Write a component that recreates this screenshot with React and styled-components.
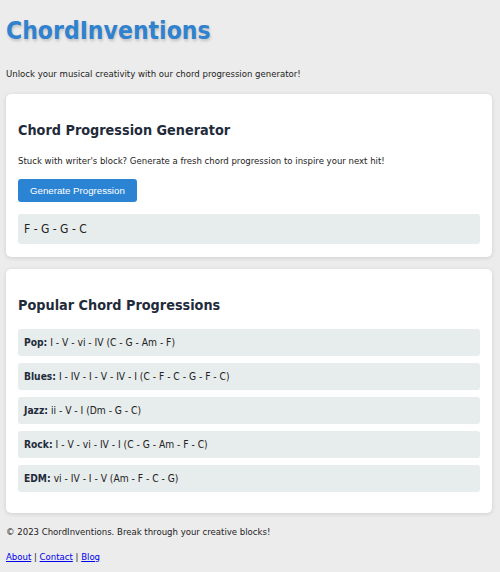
import styled, { createGlobalStyle } from "styled-components";

const GlobalStyle = createGlobalStyle`
    body {
        margin: 0;
        padding: 0 8px 0 6px;
        background-color: #ececec;
        font-family: "DejaVu Sans Condensed", "DejaVu Sans", sans-serif;
        font-size: 9.5px;
        color: #222;
    }
`;

const Header = styled.header`
    padding-top: 17px;
`;

const Title = styled.h1`
    margin: 0;
    font-size: 24.5px;
    font-weight: bold;
    color: #3182ce;
    text-shadow: 1px 2px 3px rgba(0, 0, 0, 0.18);
    line-height: 28px;
`;

const Tagline = styled.p`
    margin: 23px 0 0;
    line-height: 12px;
`;

const Card = styled.section`
    background: #fff;
    border-radius: 5px;
    box-shadow: 0 1px 4px rgba(0, 0, 0, 0.13);
    padding: 24px 12px ${(p) => p.$bottom}px;
    margin-top: ${(p) => p.$gap}px;
`;

const CardTitle = styled.h2`
    margin: 0 0 12px;
    font-size: 14.3px;
    font-weight: bold;
    color: #1f2b3a;
    line-height: 24px;
`;

const Text = styled.p`
    margin: 0 0 11px;
    line-height: 14px;
`;

const GenerateButton = styled.button`
    font-family: "Liberation Sans", Arial, sans-serif;
    font-size: 9.7px;
    color: #fff;
    background: #2b84d3;
    border: none;
    border-radius: 3px;
    height: 23px;
    padding: 0 12px;
    cursor: pointer;
`;

const Result = styled.div`
    margin-top: 12px;
    background: #e7ecec;
    border-radius: 3px;
    padding: 0 6px;
    height: 30px;
    display: flex;
    align-items: center;
    font-size: 12px;
`;

const List = styled.ul`
    list-style: none;
    margin: 0;
    padding: 0;
    display: flex;
    flex-direction: column;
    gap: 7px;
`;

const Item = styled.li`
    background: #e7ecec;
    border-radius: 3px;
    height: 27px;
    padding: 0 6px;
    display: flex;
    align-items: center;
    gap: 3px;
    font-size: 10.2px;

    & b {
        color: #1f2b3a;
    }
`;

const Footer = styled.footer`
    padding-top: 13px;
`;

const FootLine = styled.p`
    margin: 0 0 13px;
    line-height: 12px;

    & a {
        color: #0000ee;
    }
`;

const progressions = [
    ["Pop", "I - V - vi - IV (C - G - Am - F)"],
    ["Blues", "I - IV - I - V - IV - I (C - F - C - G - F - C)"],
    ["Jazz", "ii - V - I (Dm - G - C)"],
    ["Rock", "I - V - vi - IV - I (C - G - Am - F - C)"],
    ["EDM", "vi - IV - I - V (Am - F - C - G)"],
];

export default function App() {
    return (
        <>
            <GlobalStyle />
            <Header>
                <Title>ChordInventions</Title>
                <Tagline>
                    Unlock your musical creativity with our chord progression generator!
                </Tagline>
            </Header>
            <Card $gap={14} $bottom={13}>
                <CardTitle>Chord Progression Generator</CardTitle>
                <Text>
                    Stuck with writer's block? Generate a fresh chord progression to
                    inspire your next hit!
                </Text>
                <GenerateButton>Generate Progression</GenerateButton>
                <Result>F - G - G - C</Result>
            </Card>
            <Card $gap={12} $bottom={21}>
                <CardTitle>Popular Chord Progressions</CardTitle>
                <List>
                    {progressions.map(([name, chords]) => (
                        <Item key={name}>
                            <b>{name}:</b> {chords}
                        </Item>
                    ))}
                </List>
            </Card>
            <Footer>
                <FootLine>© 2023 ChordInventions. Break through your creative blocks!</FootLine>
                <FootLine>
                    <a href="#">About</a> | <a href="#">Contact</a> | <a href="#">Blog</a>
                </FootLine>
            </Footer>
        </>
    );
}
